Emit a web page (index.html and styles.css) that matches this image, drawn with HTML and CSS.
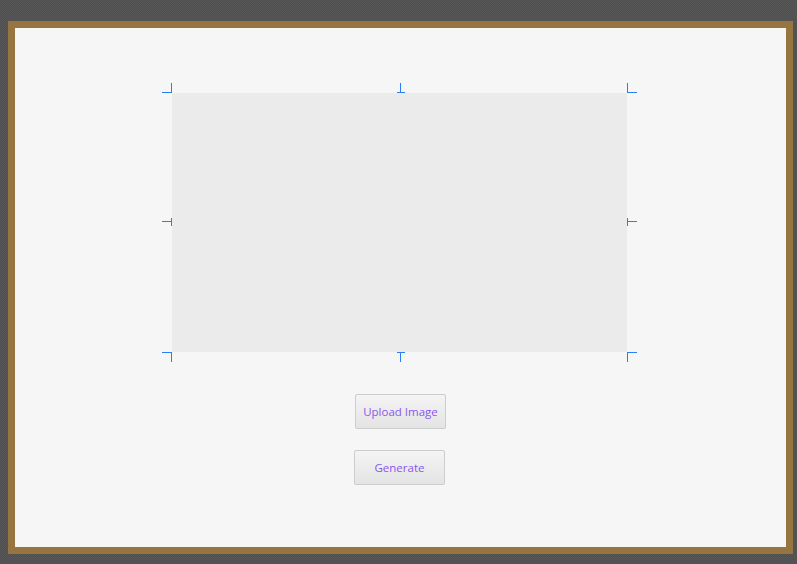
FILE: index.html
```html
<!DOCTYPE html>
<html>
<head>
<meta charset="utf-8">
<link rel="stylesheet" href="styles.css">
</head>
<body>
<div class="frame">
  <div class="canvas">
    <div class="preview">
      <span class="mk tl"></span>
      <span class="mk tr"></span>
      <span class="mk bl"></span>
      <span class="mk br"></span>
      <span class="mk tm"></span>
      <span class="mk bm"></span>
      <span class="mk lm"></span>
      <span class="mk rm"></span>
    </div>
    <button class="btn upload">Upload Image</button>
    <button class="btn generate">Generate</button>
  </div>
</div>
</body>
</html>
```
FILE: styles.css
```css
html, body {
  margin: 0;
  height: 100%;
}
body {
  background-color: #535353;
  background-image: repeating-conic-gradient(#4f4f4f 0 25%, #575757 0 50%);
  background-size: 2px 2px;
  padding: 21px 4px 10px 8px;
  box-sizing: border-box;
  font-family: "Open Sans", "Noto Sans", sans-serif;
}
.frame {
  height: 533px;
  box-sizing: border-box;
  border: 7px solid #967541;
  background: #f6f6f6;
}
.canvas {
  display: flex;
  flex-direction: column;
  align-items: center;
  padding-top: 65px;
  padding-right: 2px;
}
.preview {
  position: relative;
  width: 455px;
  height: 259px;
  background: #ebebeb;
  margin-bottom: 42px;
}
.mk {
  position: absolute;
  box-sizing: border-box;
  border-color: #2a7ff0;
  border-style: solid;
  border-width: 0;
}
.tl { left: -10px; top: -10px; width: 10px; height: 10px; border-right-width: 1px; border-bottom-width: 1px; }
.tr { left: 455px; top: -10px; width: 10px; height: 10px; border-left-width: 1px; border-bottom-width: 1px; }
.bl { left: -10px; top: 259px; width: 10px; height: 10px; border-right-width: 1px; border-top-width: 1px; }
.br { left: 455px; top: 259px; width: 10px; height: 10px; border-left-width: 1px; border-top-width: 1px; }
.tm { left: 225px; top: -10px; width: 8px; height: 10px; border-bottom-width: 1px; }
.tm::before { content: ""; position: absolute; left: 3px; top: 0; width: 1px; height: 9px; background: #2a7ff0; }
.bm { left: 225px; top: 259px; width: 8px; height: 10px; border-top-width: 1px; }
.bm::before { content: ""; position: absolute; left: 3px; top: 0; width: 1px; height: 9px; background: #2a7ff0; }
.lm { left: -10px; top: 125px; width: 10px; height: 8px; }
.lm::before { content: ""; position: absolute; top: 3px; left: 0; width: 10px; height: 1px; background: #2a7ff0; }
.lm::after { content: ""; position: absolute; top: 0; right: 0; width: 1px; height: 8px; background: #2a7ff0; }
.rm { left: 455px; top: 125px; width: 10px; height: 8px; }
.rm::before { content: ""; position: absolute; top: 3px; left: 0; width: 10px; height: 1px; background: #2a7ff0; }
.rm::after { content: ""; position: absolute; top: 0; left: 0; width: 1px; height: 8px; background: #2a7ff0; }
.btn {
  width: 91px;
  height: 35px;
  border: 1px solid #cdcdcd;
  border-radius: 2px;
  background: linear-gradient(#f4f4f4, #e4e4e4);
  color: #8a55ee;
  font-family: "Open Sans", "Noto Sans", sans-serif;
  font-size: 11.5px;
  padding: 0;
  cursor: pointer;
}
.upload { margin-bottom: 21px; margin-left: 2px; }
```
